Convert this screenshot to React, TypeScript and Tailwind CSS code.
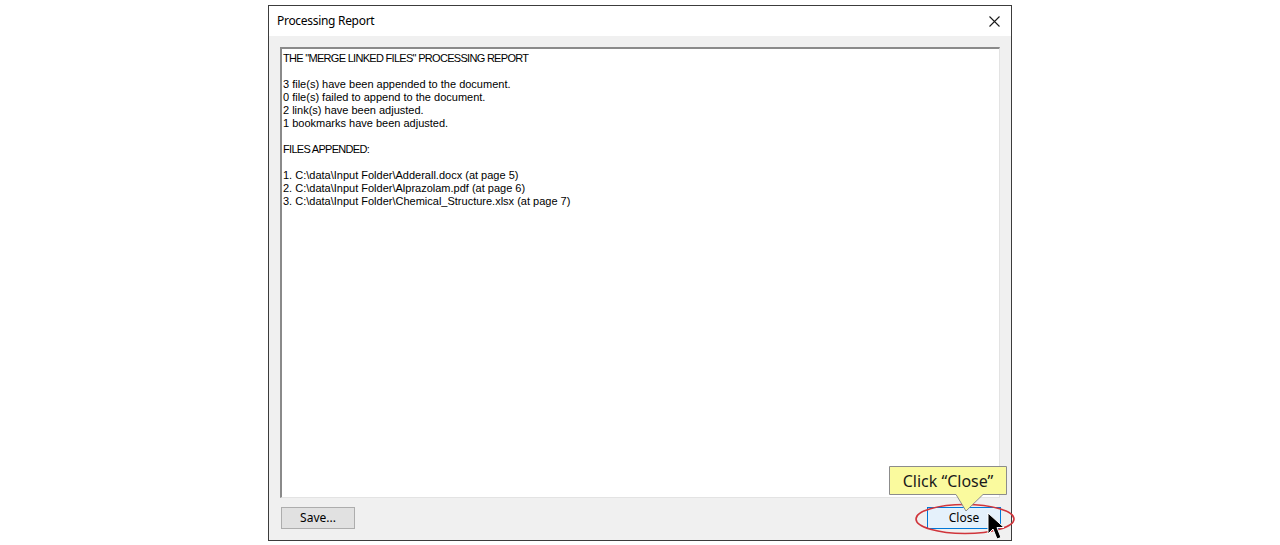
import React from "react";

const lines: string[] = [
  'THE "MERGE LINKED FILES" PROCESSING REPORT',
  "",
  "3 file(s) have been appended to the document.",
  "0 file(s) failed to append to the document.",
  "2 link(s) have been adjusted.",
  "1 bookmarks have been adjusted.",
  "",
  "FILES APPENDED:",
  "",
  "1. C:\\data\\Input Folder\\Adderall.docx (at page 5)",
  "2. C:\\data\\Input Folder\\Alprazolam.pdf (at page 6)",
  "3. C:\\data\\Input Folder\\Chemical_Structure.xlsx (at page 7)",
];

const capsLines = new Set([0, 7]);

export default function App() {
  return (
    <div className="w-[1280px] h-[545px] bg-white overflow-hidden pt-[5px]">
      <div className="relative mx-auto w-[744px] h-[536px] border border-[#3c3c3c] bg-[#f0f0f0] flex flex-col">
        {/* title bar */}
        <div className="h-[30px] bg-white flex items-center justify-between pl-[8px] pr-[10px] shrink-0">
          <span
            className="text-[12px] tracking-[-0.3px] text-black"
            style={{ fontFamily: '"Noto Sans", "Open Sans", sans-serif' }}
          >
            Processing Report
          </span>
          <svg width="11" height="11" viewBox="0 0 11 11" className="mr-[1px]">
            <path d="M0.5 0.5 L10.5 10.5 M10.5 0.5 L0.5 10.5" stroke="#1a1a1a" strokeWidth="1.1" />
          </svg>
        </div>
        {/* body */}
        <div className="flex-1 flex flex-col px-[11px] pt-[11px] pb-[11px]">
          <div className="h-[451px] bg-white border-t-2 border-l-2 border-b border-r border-t-[#8a8a8a] border-l-[#8a8a8a] border-b-[#e3e3e3] border-r-[#e3e3e3] pl-[1px] pt-[3px]">
            <div className="text-[11px] leading-[13px] text-black" style={{ fontFamily: '"Liberation Sans", Arial, sans-serif' }}>
              {lines.map((l, i) =>
                capsLines.has(i) ? (
                  <div key={i} className="h-[13px] whitespace-pre tracking-[-0.7px]">
                    {l}
                  </div>
                ) : (
                  <div key={i} className="h-[13px] whitespace-pre">
                    {l}
                  </div>
                )
              )}
            </div>
          </div>
          <div className="flex justify-between items-center mt-[9px]">
            <button
              className="w-[74px] h-[22px] bg-[#e1e1e1] border border-[#adadad] text-[12px] text-black flex items-center justify-center ml-[1px]"
              style={{ fontFamily: '"Noto Sans", "Open Sans", sans-serif' }}
            >
              Save...
            </button>
            <button
              className="w-[74px] h-[22px] bg-[#e5f1fb] border border-[#0078d7] text-[12px] text-black flex items-center justify-center mr-[-1px]"
              style={{ fontFamily: '"Noto Sans", "Open Sans", sans-serif' }}
            >
              Close
            </button>
          </div>
        </div>

        {/* red ellipse annotation */}
        <svg className="absolute left-[645px] top-[496px] pointer-events-none" width="102" height="34" viewBox="0 0 102 34">
          <ellipse cx="51" cy="17" rx="49" ry="14.5" fill="none" stroke="#d0353b" strokeWidth="1.6" />
        </svg>

        {/* callout */}
        <div className="absolute left-[620px] top-[460px] w-[120px] h-[50px] pointer-events-none">
          <svg width="120" height="50" viewBox="0 0 120 50" className="absolute left-0 top-0">
            <path
              d="M0.5 0.5 H117.5 V28.5 H94 L77 45 L67 28.5 H0.5 Z"
              fill="#fafa9e"
              stroke="#8c8c8c"
              strokeWidth="1"
            />
          </svg>
          <div
            className="absolute left-0 top-0 w-[118px] h-[29px] flex items-center justify-center text-[16px] text-[#1a1a1a]"
            style={{ fontFamily: '"Noto Sans", "Open Sans", sans-serif' }}
          >
            Click “Close”
          </div>
        </div>

        {/* mouse cursor */}
        <svg className="absolute left-[718px] top-[506px] pointer-events-none" width="22" height="32" viewBox="0 0 22 32">
          <path
            d="M1 1 L1 22 L6 17 L10 27 L14 25.5 L10 15.5 L17 15.5 Z"
            fill="#000"
            stroke="#fff"
            strokeWidth="1"
            strokeLinejoin="miter"
          />
        </svg>
      </div>
    </div>
  );
}
